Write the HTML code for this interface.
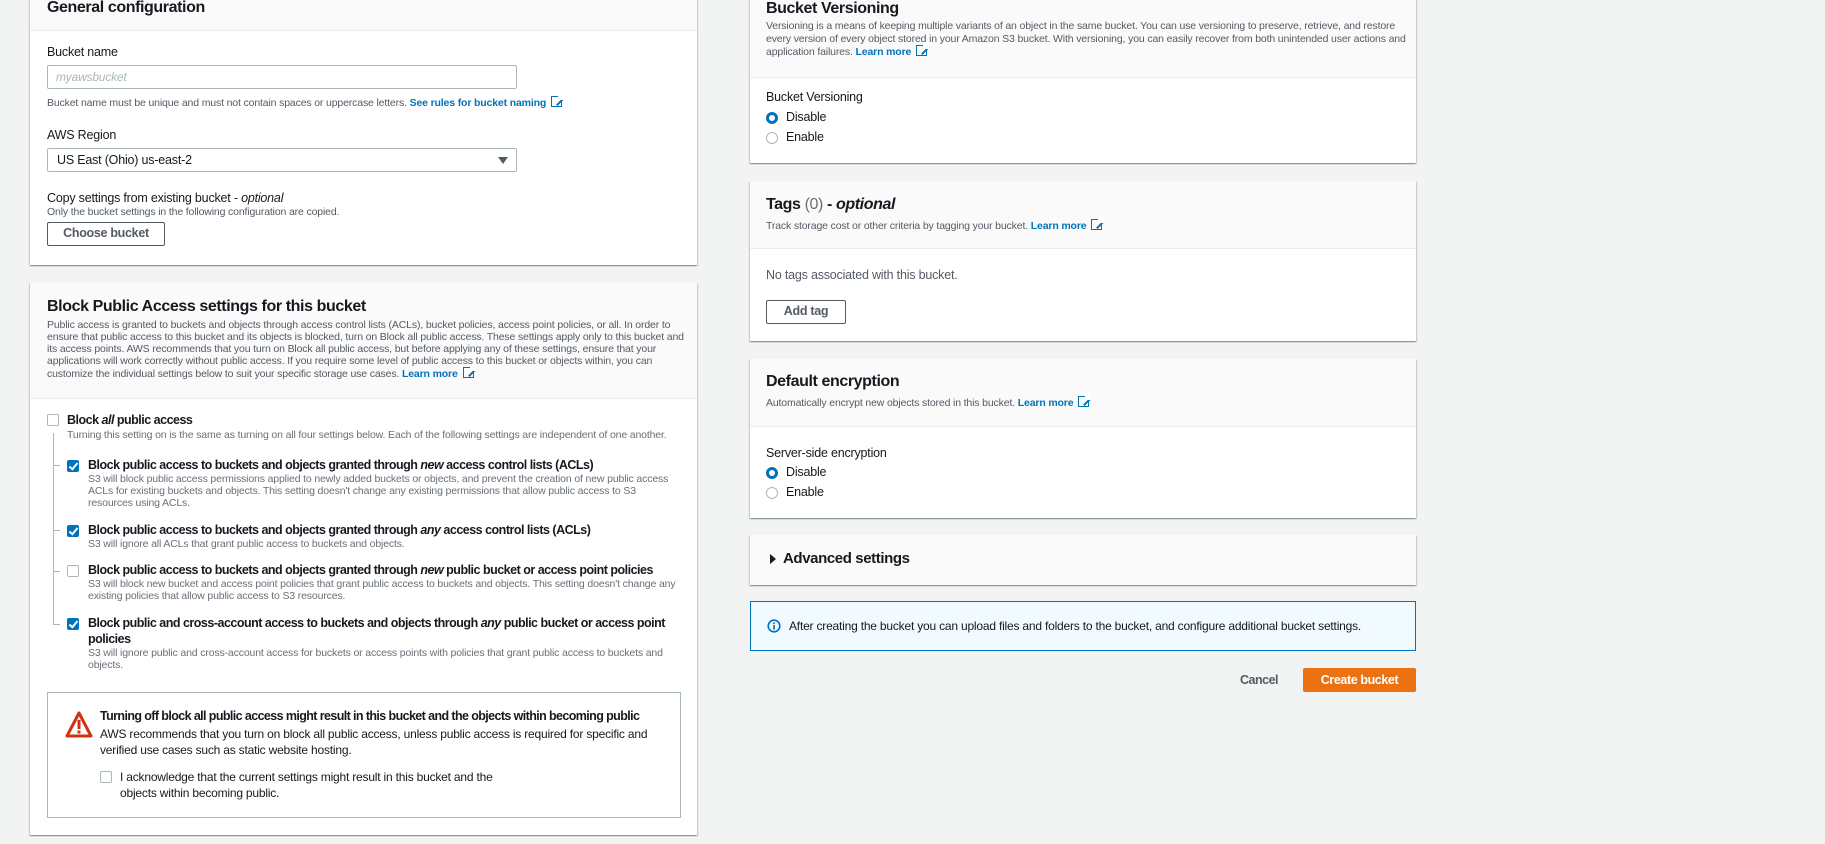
<!DOCTYPE html>
<html><head><meta charset="utf-8"><style>
*{box-sizing:border-box;margin:0;padding:0}
body{width:1825px;height:844px;background:#f2f3f3;font-family:"Liberation Sans",Arial,sans-serif;color:#16191f;position:relative;overflow:hidden}
.a{position:absolute;white-space:nowrap}
.p{position:absolute;background:#fff;box-shadow:0 1px 1px 0 rgba(0,28,36,.3),1px 1px 1px 0 rgba(0,28,36,.15),-1px 1px 1px 0 rgba(0,28,36,.15);}
.h{position:absolute;left:0;right:0;top:0;background:#fafafa;border-bottom:1px solid #eaeded}
.t{font-size:16px;font-weight:bold;letter-spacing:-.4px}
.s{font-size:10.5px;color:#545b64;letter-spacing:-.15px;line-height:12px}
.l{font-size:12.5px;letter-spacing:-.2px}
.lk{color:#0073bb;font-weight:bold}
.ext{display:inline-block;width:11px;height:11px;border:1.5px solid #0073bb;vertical-align:-1px;margin-left:5px;position:relative}
.ext:after{content:"";position:absolute;right:-3px;top:-3px;width:6px;height:6px;background:#fff}
.ext:before{content:"";position:absolute;right:-2px;top:1px;width:9px;height:1.5px;background:#0073bb;transform:rotate(-45deg);transform-origin:right}
.cb{position:absolute;width:12px;height:12px;border:1px solid #aab7b8;border-radius:2px;background:#fff}
.cb.on{background:#0073bb;border-color:#0073bb}
.cb.on:after{content:"";position:absolute;left:3px;top:0px;width:3px;height:7px;border:solid #fff;border-width:0 2px 2px 0;transform:rotate(40deg)}
.rd{position:absolute;width:12px;height:12px;border-radius:50%;border:1px solid #aab7b8;background:#fff}
.rd.on{border:3.5px solid #0073bb}
.btn{position:absolute;border:1.5px solid #545b64;border-radius:2px;font-size:12.5px;font-weight:bold;color:#545b64;text-align:center;background:#fff;letter-spacing:-.3px}
.bt{font-size:12.5px;font-weight:bold;letter-spacing:-.5px}
.d{font-size:10.5px;color:#687078;letter-spacing:-.15px;line-height:12px}
</style></head><body>

<div class="p" style="left:30px;top:-10px;width:667px;height:275px">
  <div class="h" style="height:41px"></div>
</div>
<div class="a t" style="left:47px;top:-1px">General configuration</div>
<div class="a l" style="left:47px;top:45px">Bucket name</div>
<div class="a" style="left:47px;top:65px;width:470px;height:24px;border:1px solid #aab7b8;border-radius:2px;background:#fff"></div>
<div class="a l" style="left:56px;top:70px;color:#aab7b8;font-style:italic;font-size:12px">myawsbucket</div>
<div class="a s" style="left:47px;top:96px">Bucket name must be unique and must not contain spaces or uppercase letters. <span class="lk">See rules for bucket naming</span><span class="ext"></span></div>
<div class="a l" style="left:47px;top:128px">AWS Region</div>
<div class="a" style="left:47px;top:148px;width:470px;height:24px;border:1px solid #aab7b8;border-radius:2px;background:#fff"></div>
<div class="a l" style="left:57px;top:153px">US East (Ohio) us-east-2</div>
<div class="a" style="left:498px;top:157px;width:0;height:0;border-left:5px solid transparent;border-right:5px solid transparent;border-top:7px solid #545b64"></div>
<div class="a l" style="left:47px;top:191px">Copy settings from existing bucket - <i>optional</i></div>
<div class="a s" style="left:47px;top:206px">Only the bucket settings in the following configuration are copied.</div>
<div class="btn" style="left:47px;top:222px;width:118px;height:24px;line-height:21px">Choose bucket</div>

<div class="p" style="left:30px;top:283px;width:667px;height:552px">
  <div class="h" style="height:116px"></div>
</div>
<div class="a t" style="left:47px;top:298px">Block Public Access settings for this bucket</div>
<div class="a s" style="left:47px;top:319px;white-space:normal;width:640px">Public access is granted to buckets and objects through access control lists (ACLs), bucket policies, access point policies, or all. In order to ensure that public access to this bucket and its objects is blocked, turn on Block all public access. These settings apply only to this bucket and its access points. AWS recommends that you turn on Block all public access, but before applying any of these settings, ensure that your applications will work correctly without public access. If you require some level of public access to this bucket or objects within, you can customize the individual settings below to suit your specific storage use cases. <span class="lk">Learn more</span><span class="ext"></span></div>

<div class="cb" style="left:47px;top:414px"></div>
<div class="a bt" style="left:67px;top:413px">Block <i>all</i> public access</div>
<div class="a d" style="left:67px;top:429px">Turning this setting on is the same as turning on all four settings below. Each of the following settings are independent of one another.</div>
<div class="a" style="left:53px;top:433px;width:1px;height:191px;background:#aab7b8"></div>
<div class="a" style="left:53px;top:465px;width:7px;height:1px;background:#aab7b8"></div>
<div class="a" style="left:53px;top:530px;width:7px;height:1px;background:#aab7b8"></div>
<div class="a" style="left:53px;top:571px;width:7px;height:1px;background:#aab7b8"></div>
<div class="a" style="left:53px;top:624px;width:7px;height:1px;background:#aab7b8"></div>

<div class="cb on" style="left:67px;top:460px"></div>
<div class="a bt" style="left:88px;top:458px">Block public access to buckets and objects granted through <i>new</i> access control lists (ACLs)</div>
<div class="a d" style="left:88px;top:473px;white-space:normal;width:595px">S3 will block public access permissions applied to newly added buckets or objects, and prevent the creation of new public access ACLs for existing buckets and objects. This setting doesn't change any existing permissions that allow public access to S3 resources using ACLs.</div>

<div class="cb on" style="left:67px;top:525px"></div>
<div class="a bt" style="left:88px;top:523px">Block public access to buckets and objects granted through <i>any</i> access control lists (ACLs)</div>
<div class="a d" style="left:88px;top:538px">S3 will ignore all ACLs that grant public access to buckets and objects.</div>

<div class="cb" style="left:67px;top:565px"></div>
<div class="a bt" style="left:88px;top:563px">Block public access to buckets and objects granted through <i>new</i> public bucket or access point policies</div>
<div class="a d" style="left:88px;top:578px;white-space:normal;width:595px">S3 will block new bucket and access point policies that grant public access to buckets and objects. This setting doesn't change any existing policies that allow public access to S3 resources.</div>

<div class="cb on" style="left:67px;top:618px"></div>
<div class="a bt" style="left:88px;top:616px">Block public and cross-account access to buckets and objects through <i>any</i> public bucket or access point</div>
<div class="a bt" style="left:88px;top:632px">policies</div>
<div class="a d" style="left:88px;top:647px;white-space:normal;width:595px">S3 will ignore public and cross-account access for buckets or access points with policies that grant public access to buckets and objects.</div>

<div class="a" style="left:47px;top:692px;width:634px;height:126px;border:1px solid #aab7b8;background:#fff"></div>
<svg class="a" style="left:65px;top:711px" width="28" height="27" viewBox="0 0 28 27"><path d="M14 2 L26 25 L2 25 Z" fill="none" stroke="#d13212" stroke-width="3" stroke-linejoin="round"/><rect x="12.5" y="9" width="3" height="9" fill="#d13212"/><rect x="12.5" y="19.5" width="3" height="3" fill="#d13212"/></svg>
<div class="a bt" style="left:100px;top:709px;letter-spacing:-.6px">Turning off block all public access might result in this bucket and the objects within becoming public</div>
<div class="a" style="left:100px;top:726px;font-size:12px;line-height:16px;white-space:normal;width:570px;letter-spacing:-.2px">AWS recommends that you turn on block all public access, unless public access is required for specific and verified use cases such as static website hosting.</div>
<div class="cb" style="left:100px;top:771px"></div>
<div class="a" style="left:120px;top:769px;font-size:12px;line-height:16px;letter-spacing:-.2px">I acknowledge that the current settings might result in this bucket and the<br>objects within becoming public.</div>

<div class="p" style="left:750px;top:-10px;width:666px;height:173px">
  <div class="h" style="height:88px"></div>
</div>
<div class="a t" style="left:766px;top:0px">Bucket Versioning</div>
<div class="a s" style="left:766px;top:20px;white-space:normal;width:640px;line-height:12.5px">Versioning is a means of keeping multiple variants of an object in the same bucket. You can use versioning to preserve, retrieve, and restore every version of every object stored in your Amazon S3 bucket. With versioning, you can easily recover from both unintended user actions and application failures. <span class="lk">Learn more</span><span class="ext"></span></div>
<div class="a l" style="left:766px;top:90px">Bucket Versioning</div>
<div class="rd on" style="left:766px;top:112px"></div>
<div class="a l" style="left:786px;top:110px">Disable</div>
<div class="rd" style="left:766px;top:132px"></div>
<div class="a l" style="left:786px;top:130px">Enable</div>

<div class="p" style="left:750px;top:181px;width:666px;height:160px">
  <div class="h" style="height:68px"></div>
</div>
<div class="a t" style="left:766px;top:196px">Tags <span style="font-weight:normal;color:#687078">(0)</span> - <i>optional</i></div>
<div class="a s" style="left:766px;top:219px">Track storage cost or other criteria by tagging your bucket. <span class="lk">Learn more</span><span class="ext"></span></div>
<div class="a l" style="left:766px;top:268px;color:#545b64">No tags associated with this bucket.</div>
<div class="btn" style="left:766px;top:300px;width:80px;height:24px;line-height:21px">Add tag</div>

<div class="p" style="left:750px;top:359px;width:666px;height:159px">
  <div class="h" style="height:68px"></div>
</div>
<div class="a t" style="left:766px;top:373px">Default encryption</div>
<div class="a s" style="left:766px;top:396px">Automatically encrypt new objects stored in this bucket. <span class="lk">Learn more</span><span class="ext"></span></div>
<div class="a l" style="left:766px;top:446px">Server-side encryption</div>
<div class="rd on" style="left:766px;top:467px"></div>
<div class="a l" style="left:786px;top:465px">Disable</div>
<div class="rd" style="left:766px;top:487px"></div>
<div class="a l" style="left:786px;top:485px">Enable</div>

<div class="p" style="left:750px;top:535px;width:666px;height:50px;background:#fafafa"></div>
<div class="a" style="left:770px;top:554px;width:0;height:0;border-top:5px solid transparent;border-bottom:5px solid transparent;border-left:6px solid #16191f"></div>
<div class="a" style="left:783px;top:550px;font-size:15px;font-weight:bold;letter-spacing:-.4px">Advanced settings</div>

<div class="a" style="left:750px;top:601px;width:666px;height:50px;border:1px solid #0073bb;background:#f1faff"></div>
<svg class="a" style="left:767px;top:619px" width="14" height="14" viewBox="0 0 14 14"><circle cx="7" cy="7" r="5.8" fill="none" stroke="#0073bb" stroke-width="1.6"/><rect x="6.2" y="6" width="1.7" height="4.5" fill="#0073bb"/><rect x="6.2" y="3.4" width="1.7" height="1.7" fill="#0073bb"/></svg>
<div class="a" style="left:789px;top:619px;font-size:12px;letter-spacing:-.2px">After creating the bucket you can upload files and folders to the bucket, and configure additional bucket settings.</div>

<div class="a bt" style="left:1240px;top:673px;color:#545b64">Cancel</div>
<div class="a" style="left:1303px;top:668px;width:113px;height:24px;background:#ec7211;border-radius:2px;color:#fff;font-size:12.5px;font-weight:bold;text-align:center;line-height:24px;letter-spacing:-.4px">Create bucket</div>
</body></html>
